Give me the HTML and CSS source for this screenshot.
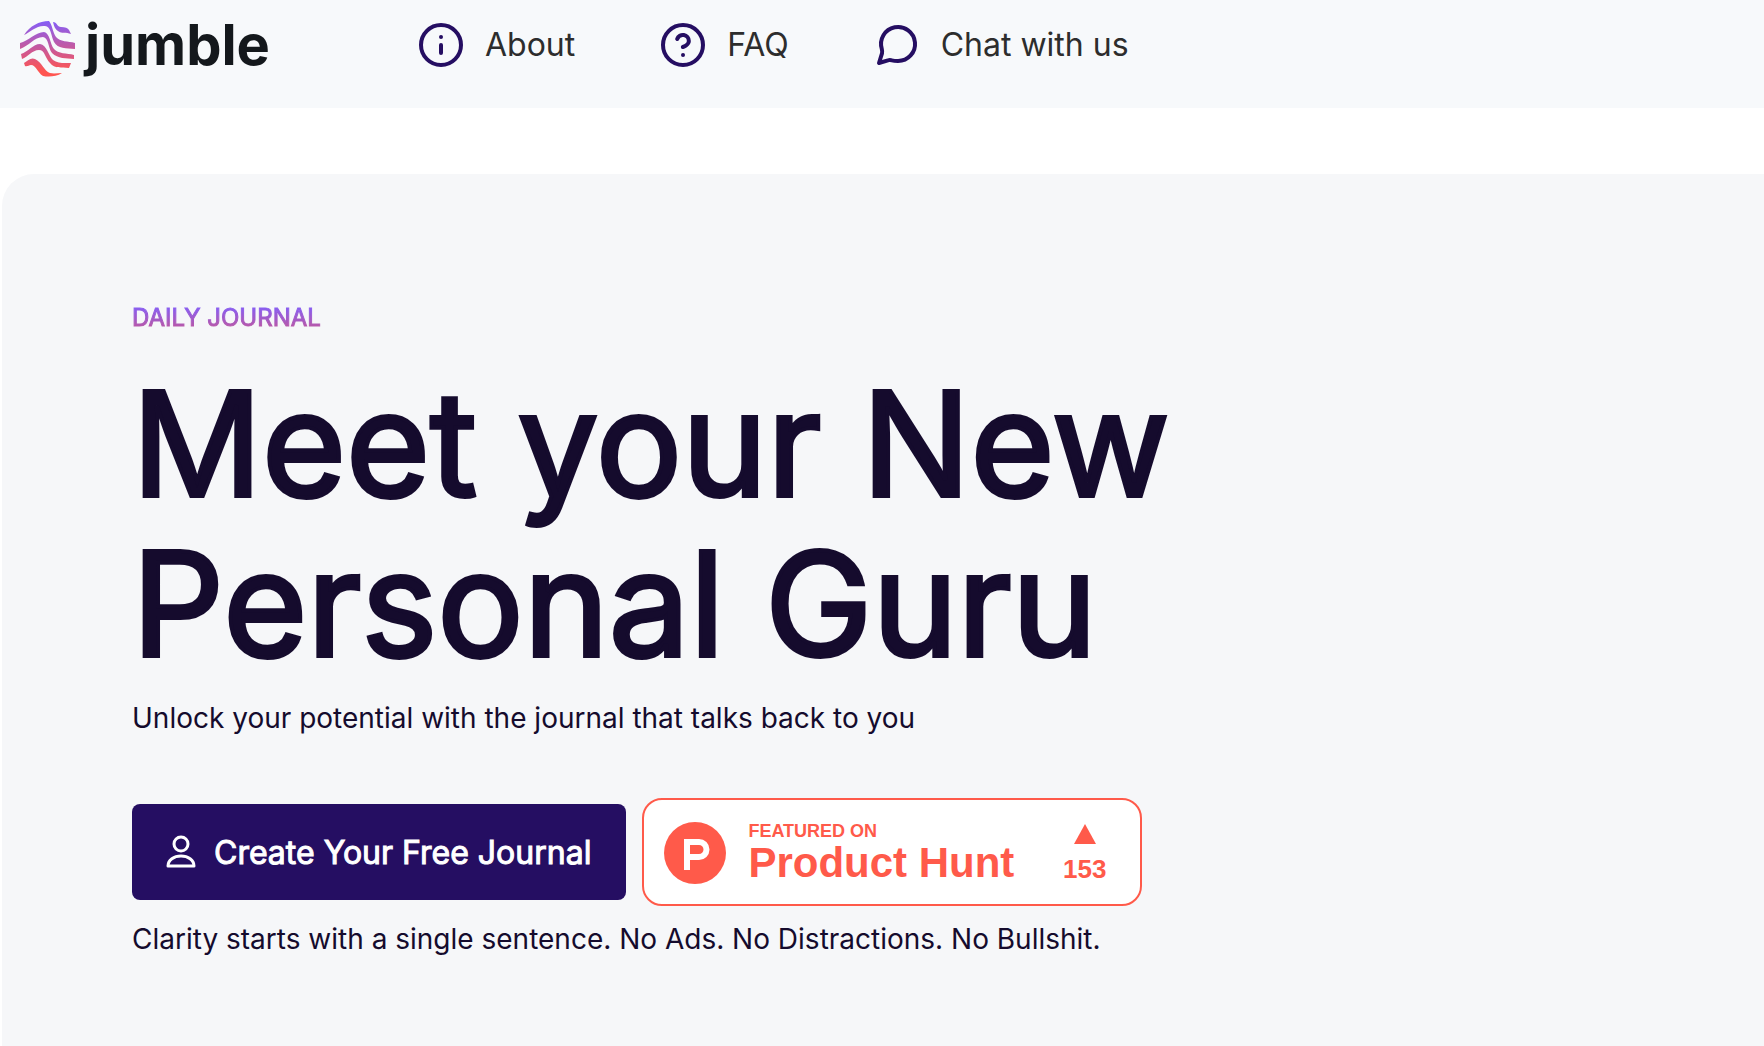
FILE: index.html
```
<!DOCTYPE html>
<html lang="en">
<head>
    <meta charset="UTF-8">
    <meta name="viewport" content="width=device-width, initial-scale=1.0">
    <title>Jumble - Daily Journal</title>
    <link rel="stylesheet" href="styles.css">
</head>
<body>
    <header class="header">
        <a href="#" class="logo">
            <svg class="logo-mark" viewBox="0 0 56 56" aria-hidden="true">
                <defs>
                    <linearGradient id="logoGradient" x1="0" y1="0" x2="0" y2="56" gradientUnits="userSpaceOnUse">
                        <stop offset="0" stop-color="#845ef7"/>
                        <stop offset="0.9" stop-color="#ff5550"/>
                    </linearGradient>
                </defs>
                <g fill="url(#logoGradient)">
                    <path d="M4 14C10 5 19 0 29 0C32 3 33 12 36 16C40 21 48 20 55 22L55 28C46 27 38 28 34 21C31 15 31 5 25 5C17 4 10 11 4 14Z"/>
                    <path d="M33 1C37 1 37 6 41 6C45 6 48 7 49 9L51 13C46 11 42 13 38 10C34 7 34 4 33 1Z"/>
                    <path d="M0 22C8 20 16 11 24 11C30 12 30 23 34 28C38 33 47 32 54 34L54 38C46 37 38 38 32 32C28 27 29 17 23 16C14 16 9 25 0 28Z"/>
                    <path d="M1 33C8 31 13 23 20 23C27 24 28 34 33 39C38 43 46 42 51 42L49 47C41 46 35 48 30 42C25 37 25 29 19 29C12 29 8 36 2 38Z"/>
                    <path d="M4 42C7 40 11 36 15 38C22 41 24 50 30 52C34 53 38 52 42 52C36 56 28 56 23 55C17 51 16 44 11 44C9 44 7 46 5 45Z"/>
                </g>
            </svg>
            <span class="logo-text">jumble</span>
        </a>
        <nav class="nav">
            <a href="#about" class="nav-link">
                <svg class="nav-icon" viewBox="0 0 24 24" aria-hidden="true">
                    <circle cx="12" cy="12" r="10"/>
                    <path d="M12 16v-4M12 8h.01"/>
                </svg>
                About
            </a>
            <a href="#faq" class="nav-link">
                <svg class="nav-icon" viewBox="0 0 24 24" aria-hidden="true">
                    <circle cx="12" cy="12" r="10"/>
                    <path d="M9.09 9a3 3 0 0 1 5.83 1c0 2-3 3-3 3M12 17h.01"/>
                </svg>
                FAQ
            </a>
            <a href="#chat" class="nav-link">
                <svg class="nav-icon" viewBox="0 0 24 24" aria-hidden="true">
                    <path d="M12.5 20a8.500 8.500 0 1 0-8.100-6c.2.8.3 1.400.1 2.200L3 21l4.900-1.400c.6-.2 1-.1 1.600.1 1 .3 2 .3 3 .3z"/>
                </svg>
                Chat with us
            </a>
        </nav>
    </header>

    <main class="hero">
        <p class="eyebrow">DAILY JOURNAL</p>
        <h1 class="title">Meet your New<br>Personal Guru</h1>
        <p class="text">Unlock your potential with the journal that talks back to you</p>
        <div class="actions">
            <button type="button" class="cta">
                <svg class="cta-icon" viewBox="0 0 28 32" aria-hidden="true">
                    <circle cx="14" cy="8" r="7"/>
                    <path d="M1 30C1 24 7 20 14 20S27 24 27 30z"/>
                </svg>
                Create Your Free Journal
            </button>
            <a href="#product-hunt" class="badge">
                <svg class="badge-logo" viewBox="0 0 62 62" aria-hidden="true">
                    <circle cx="31" cy="31" r="31" fill="#ff5a4a"/>
                    <path d="M23 48V20h12a7 7 0 0 1 0 15H23" fill="none" stroke="#fff" stroke-width="6"/>
                </svg>
                <span class="badge-text">
                    <span class="badge-label">FEATURED ON</span>
                    <span class="badge-name">Product Hunt</span>
                </span>
                <span class="badge-votes">
                    <svg class="badge-arrow" viewBox="0 0 22 20" aria-hidden="true">
                        <path d="M11 0l11 20H0z"/>
                    </svg>
                    153
                </span>
            </a>
        </div>
        <p class="text">Clarity starts with a single sentence. No Ads. No Distractions. No Bullshit.</p>
    </main>
</body>
</html>
```
FILE: styles.css
```
* {
    margin: 0;
    padding: 0;
    box-sizing: border-box;
}

body {
    background-color: #fff;
    color: #150b2d;
    font-family: Inter, sans-serif;
}

a {
    color: inherit;
    text-decoration: none;
}

.header {
    display: flex;
    align-items: flex-start;
    gap: 147px;
    height: 108px;
    padding: 21px 20px;
    background-color: #f7f9fb;
}

.logo {
    display: flex;
    gap: 9px;
}

.logo-mark {
    width: 56px;
    height: 56px;
}

.logo-text {
    color: #14181c;
    font-size: 56px;
    font-weight: 700;
    line-height: 48px;
}

.nav {
    display: flex;
    gap: 84px;
}

.nav-link {
    display: flex;
    align-items: center;
    gap: 20px;
    color: #2d2d2d;
    font-size: 32px;
    line-height: 48px;
}

.nav-icon {
    width: 48px;
    height: 48px;
    fill: none;
    stroke: #250e62;
    stroke-width: 2;
    stroke-linecap: round;
    stroke-linejoin: round;
}

.hero {
    min-height: calc(100vh - 174px);
    margin-top: 66px;
    margin-left: 2px;
    padding: 124px 130px 80px;
    background-color: #f6f7f9;
    border-top-left-radius: 32px;
}

.eyebrow {
    width: fit-content;
    background: linear-gradient(#845ef7 20%, #c9568f 90%);
    background-clip: text;
    -webkit-background-clip: text;
    color: transparent;
    font-size: 24px;
    font-weight: 400;
    line-height: 40px;
    -webkit-text-stroke: 1px transparent;
}

.title {
    margin: 26px 0 14px;
    font-size: 144px;
    font-weight: 400;
    line-height: 160px;
    -webkit-text-stroke: 4px #150b2d;
}

.text {
    font-size: 28px;
    line-height: 40px;
}

.actions {
    display: flex;
    align-items: center;
    gap: 16px;
    margin: 60px 0 13px;
}

.cta {
    display: flex;
    align-items: center;
    gap: 19px;
    height: 96px;
    padding: 0 35px;
    border: none;
    border-radius: 8px;
    background-color: #250e62;
    color: #fff;
    font-family: inherit;
    font-size: 32px;
    font-weight: 400;
    -webkit-text-stroke: 1px #fff;
    cursor: pointer;
}

.cta-icon {
    width: 28px;
    height: 32px;
    fill: none;
    stroke: currentColor;
    stroke-width: 3;
    stroke-linejoin: round;
    overflow: visible;
}

.badge {
    display: flex;
    align-items: center;
    width: 500px;
    height: 108px;
    padding: 2px 34px 0 20px;
    border: 2px solid #ff5a4a;
    border-radius: 20px;
    background-color: #fff;
    color: #ff5a4a;
    font-family: "Liberation Sans", Arial, sans-serif;
    font-weight: 700;
}

.badge-logo {
    width: 62px;
    height: 62px;
}

.badge-text {
    display: flex;
    flex-direction: column;
    margin-left: 22px;
}

.badge-label {
    font-size: 18px;
    line-height: 20px;
}

.badge-name {
    font-size: 42px;
    line-height: 44px;
}

.badge-votes {
    display: flex;
    flex-direction: column;
    align-items: center;
    gap: 12px;
    margin-left: auto;
    font-size: 26px;
    line-height: 26px;
}

.badge-arrow {
    width: 22px;
    height: 20px;
    fill: currentColor;
}
```
